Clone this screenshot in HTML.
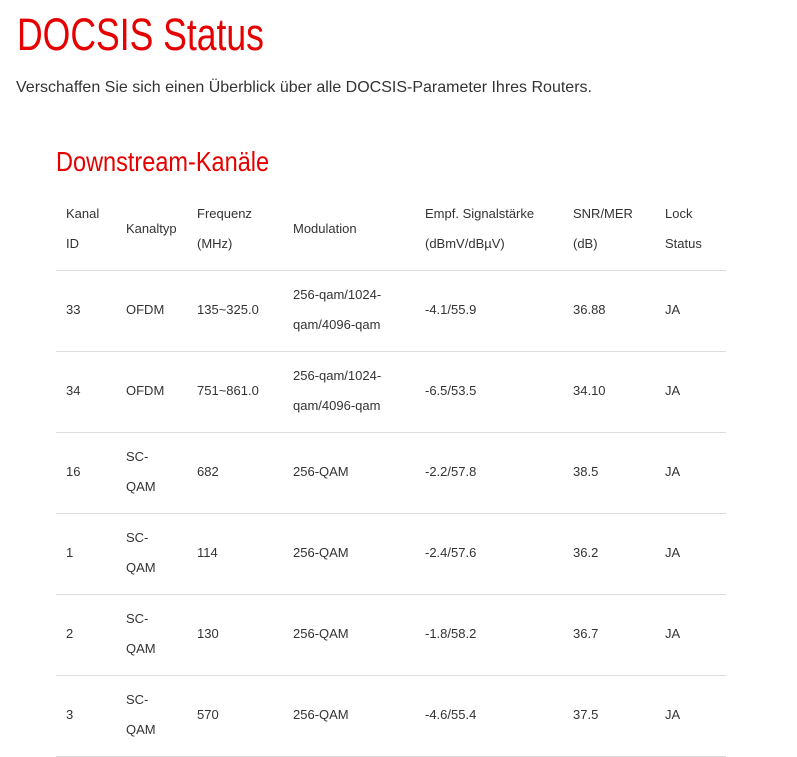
<!DOCTYPE html>
<html><head><meta charset="utf-8"><style>
body{margin:0;background:#fff;width:797px;height:757px;overflow:hidden;position:relative;font-family:"Liberation Sans",Arial,sans-serif;color:#333}
.t{position:absolute;white-space:nowrap}
h1{position:absolute;left:17px;top:9px;margin:0;font-weight:normal;color:#e60000;font-size:45px;line-height:52px;transform:scaleX(0.79);transform-origin:0 0;white-space:nowrap}
h2{position:absolute;left:56px;top:145px;margin:0;font-weight:normal;color:#e60000;font-size:28px;line-height:34px;transform:scaleX(0.84);transform-origin:0 0;white-space:nowrap}
.p{position:absolute;left:16px;top:78px;font-size:16px;line-height:20px;color:#333}
.c{position:absolute;font-size:13px;line-height:30px;white-space:nowrap}
.ln{position:absolute;left:56px;width:670px;height:1px;background:#ddd}
</style></head><body>
<h1>DOCSIS Status</h1>
<div class="p">Verschaffen Sie sich einen Überblick über alle DOCSIS-Parameter Ihres Routers.</div>
<h2>Downstream-Kanäle</h2>

<div class="c" style="left:66px;top:199px">Kanal<br>ID</div>
<div class="c" style="left:126px;top:214px">Kanaltyp</div>
<div class="c" style="left:197px;top:199px">Frequenz<br>(MHz)</div>
<div class="c" style="left:293px;top:214px">Modulation</div>
<div class="c" style="left:425px;top:199px">Empf. Signalstärke<br>(dBmV/dBµV)</div>
<div class="c" style="left:573px;top:199px">SNR/MER<br>(dB)</div>
<div class="c" style="left:665px;top:199px">Lock<br>Status</div>
<div class="ln" style="top:270px"></div>

<div class="c" style="left:66px;top:295px">33</div>
<div class="c" style="left:126px;top:295px">OFDM</div>
<div class="c" style="left:197px;top:295px">135~325.0</div>
<div class="c" style="left:293px;top:280px">256-qam/1024-<br>qam/4096-qam</div>
<div class="c" style="left:425px;top:295px">-4.1/55.9</div>
<div class="c" style="left:573px;top:295px">36.88</div>
<div class="c" style="left:665px;top:295px">JA</div>
<div class="ln" style="top:351px"></div>

<div class="c" style="left:66px;top:376px">34</div>
<div class="c" style="left:126px;top:376px">OFDM</div>
<div class="c" style="left:197px;top:376px">751~861.0</div>
<div class="c" style="left:293px;top:361px">256-qam/1024-<br>qam/4096-qam</div>
<div class="c" style="left:425px;top:376px">-6.5/53.5</div>
<div class="c" style="left:573px;top:376px">34.10</div>
<div class="c" style="left:665px;top:376px">JA</div>
<div class="ln" style="top:432px"></div>

<div class="c" style="left:66px;top:457px">16</div>
<div class="c" style="left:126px;top:442px">SC-<br>QAM</div>
<div class="c" style="left:197px;top:457px">682</div>
<div class="c" style="left:293px;top:457px">256-QAM</div>
<div class="c" style="left:425px;top:457px">-2.2/57.8</div>
<div class="c" style="left:573px;top:457px">38.5</div>
<div class="c" style="left:665px;top:457px">JA</div>
<div class="ln" style="top:513px"></div>

<div class="c" style="left:66px;top:538px">1</div>
<div class="c" style="left:126px;top:523px">SC-<br>QAM</div>
<div class="c" style="left:197px;top:538px">114</div>
<div class="c" style="left:293px;top:538px">256-QAM</div>
<div class="c" style="left:425px;top:538px">-2.4/57.6</div>
<div class="c" style="left:573px;top:538px">36.2</div>
<div class="c" style="left:665px;top:538px">JA</div>
<div class="ln" style="top:594px"></div>

<div class="c" style="left:66px;top:619px">2</div>
<div class="c" style="left:126px;top:604px">SC-<br>QAM</div>
<div class="c" style="left:197px;top:619px">130</div>
<div class="c" style="left:293px;top:619px">256-QAM</div>
<div class="c" style="left:425px;top:619px">-1.8/58.2</div>
<div class="c" style="left:573px;top:619px">36.7</div>
<div class="c" style="left:665px;top:619px">JA</div>
<div class="ln" style="top:675px"></div>

<div class="c" style="left:66px;top:700px">3</div>
<div class="c" style="left:126px;top:685px">SC-<br>QAM</div>
<div class="c" style="left:197px;top:700px">570</div>
<div class="c" style="left:293px;top:700px">256-QAM</div>
<div class="c" style="left:425px;top:700px">-4.6/55.4</div>
<div class="c" style="left:573px;top:700px">37.5</div>
<div class="c" style="left:665px;top:700px">JA</div>
<div class="ln" style="top:756px"></div>
</body></html>
